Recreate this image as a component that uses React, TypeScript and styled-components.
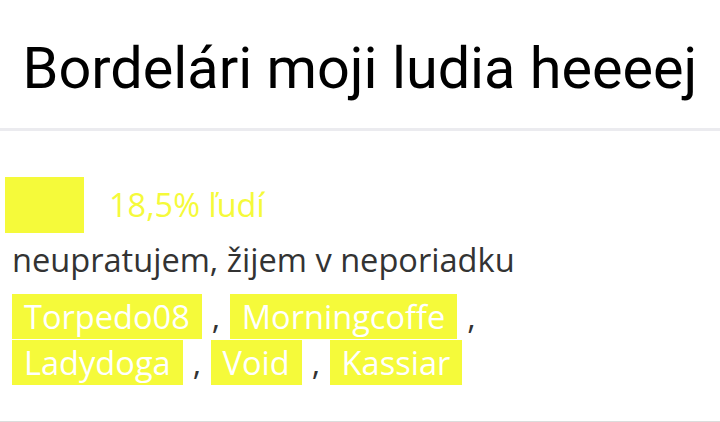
import { Fragment } from "react";
import styled, { createGlobalStyle } from "styled-components";

const GlobalStyle = createGlobalStyle`
  html, body {
    margin: 0;
    padding: 0;
    background: #ffffff;
  }
  body {
    font-family: "Open Sans", "Noto Sans", sans-serif;
    color: #333333;
  }
`;

const Page = styled.div`
  width: 720px;
`;

const Header = styled.header`
  height: 131px;
  box-sizing: border-box;
  padding-top: 35px;
  display: flex;
  justify-content: center;
  border-bottom: 3px solid #ebebef;
`;

const Title = styled.h1`
  margin: 0;
  font-family: Roboto, "Liberation Sans", sans-serif;
  font-weight: 400;
  font-size: 57.6px;
  line-height: normal;
  color: #000000;
`;

const Answer = styled.section`
  width: 720px;
  box-sizing: border-box;
  padding: 46px 0 35px 0;
  border-bottom: 2px solid #dcdcdc;
`;

const StatRow = styled.div`
  display: flex;
  align-items: center;
  gap: 25px;
  padding-left: 5px;
  height: 56px;
`;

const Swatch = styled.div<{ $color: string }>`
  width: 79px;
  height: 56px;
  background: ${(p) => p.$color};
`;

const Percent = styled.span<{ $color: string }>`
  font-size: 32.5px;
  line-height: 56px;
  color: ${(p) => p.$color};
`;

const Label = styled.p`
  margin: 5px 0 0 12px;
  font-size: 32.6px;
  line-height: 44px;
  color: #333333;
`;

const Voters = styled.div`
  margin: 12px 0 0 11px;
  width: 530px;
  font-size: 32.6px;
  line-height: 46px;
  color: #333333;
`;

const Chip = styled.span<{ $color: string }>`
  background: ${(p) => p.$color};
  color: #ffffff;
  padding: 0 12px;
  margin: 0 1.5px 0 1px;
`;

const yellow = "#f5fa3a";
const voters = ["Torpedo08", "Morningcoffe", "Ladydoga", "Void", "Kassiar"];

export default function App() {
  return (
    <Page>
      <GlobalStyle />
      <Header>
        <Title>Bordelári moji ludia heeeej</Title>
      </Header>
      <Answer>
        <StatRow>
          <Swatch $color={yellow} />
          <Percent $color={yellow}>18,5% ľudí</Percent>
        </StatRow>
        <Label>neupratujem, žijem v neporiadku</Label>
        <Voters>
          {voters.map((name, i) => (
            <Fragment key={name}>
              <Chip $color={yellow}>{name}</Chip>
              {i < voters.length - 1 ? " , " : ""}
            </Fragment>
          ))}
        </Voters>
      </Answer>
    </Page>
  );
}
